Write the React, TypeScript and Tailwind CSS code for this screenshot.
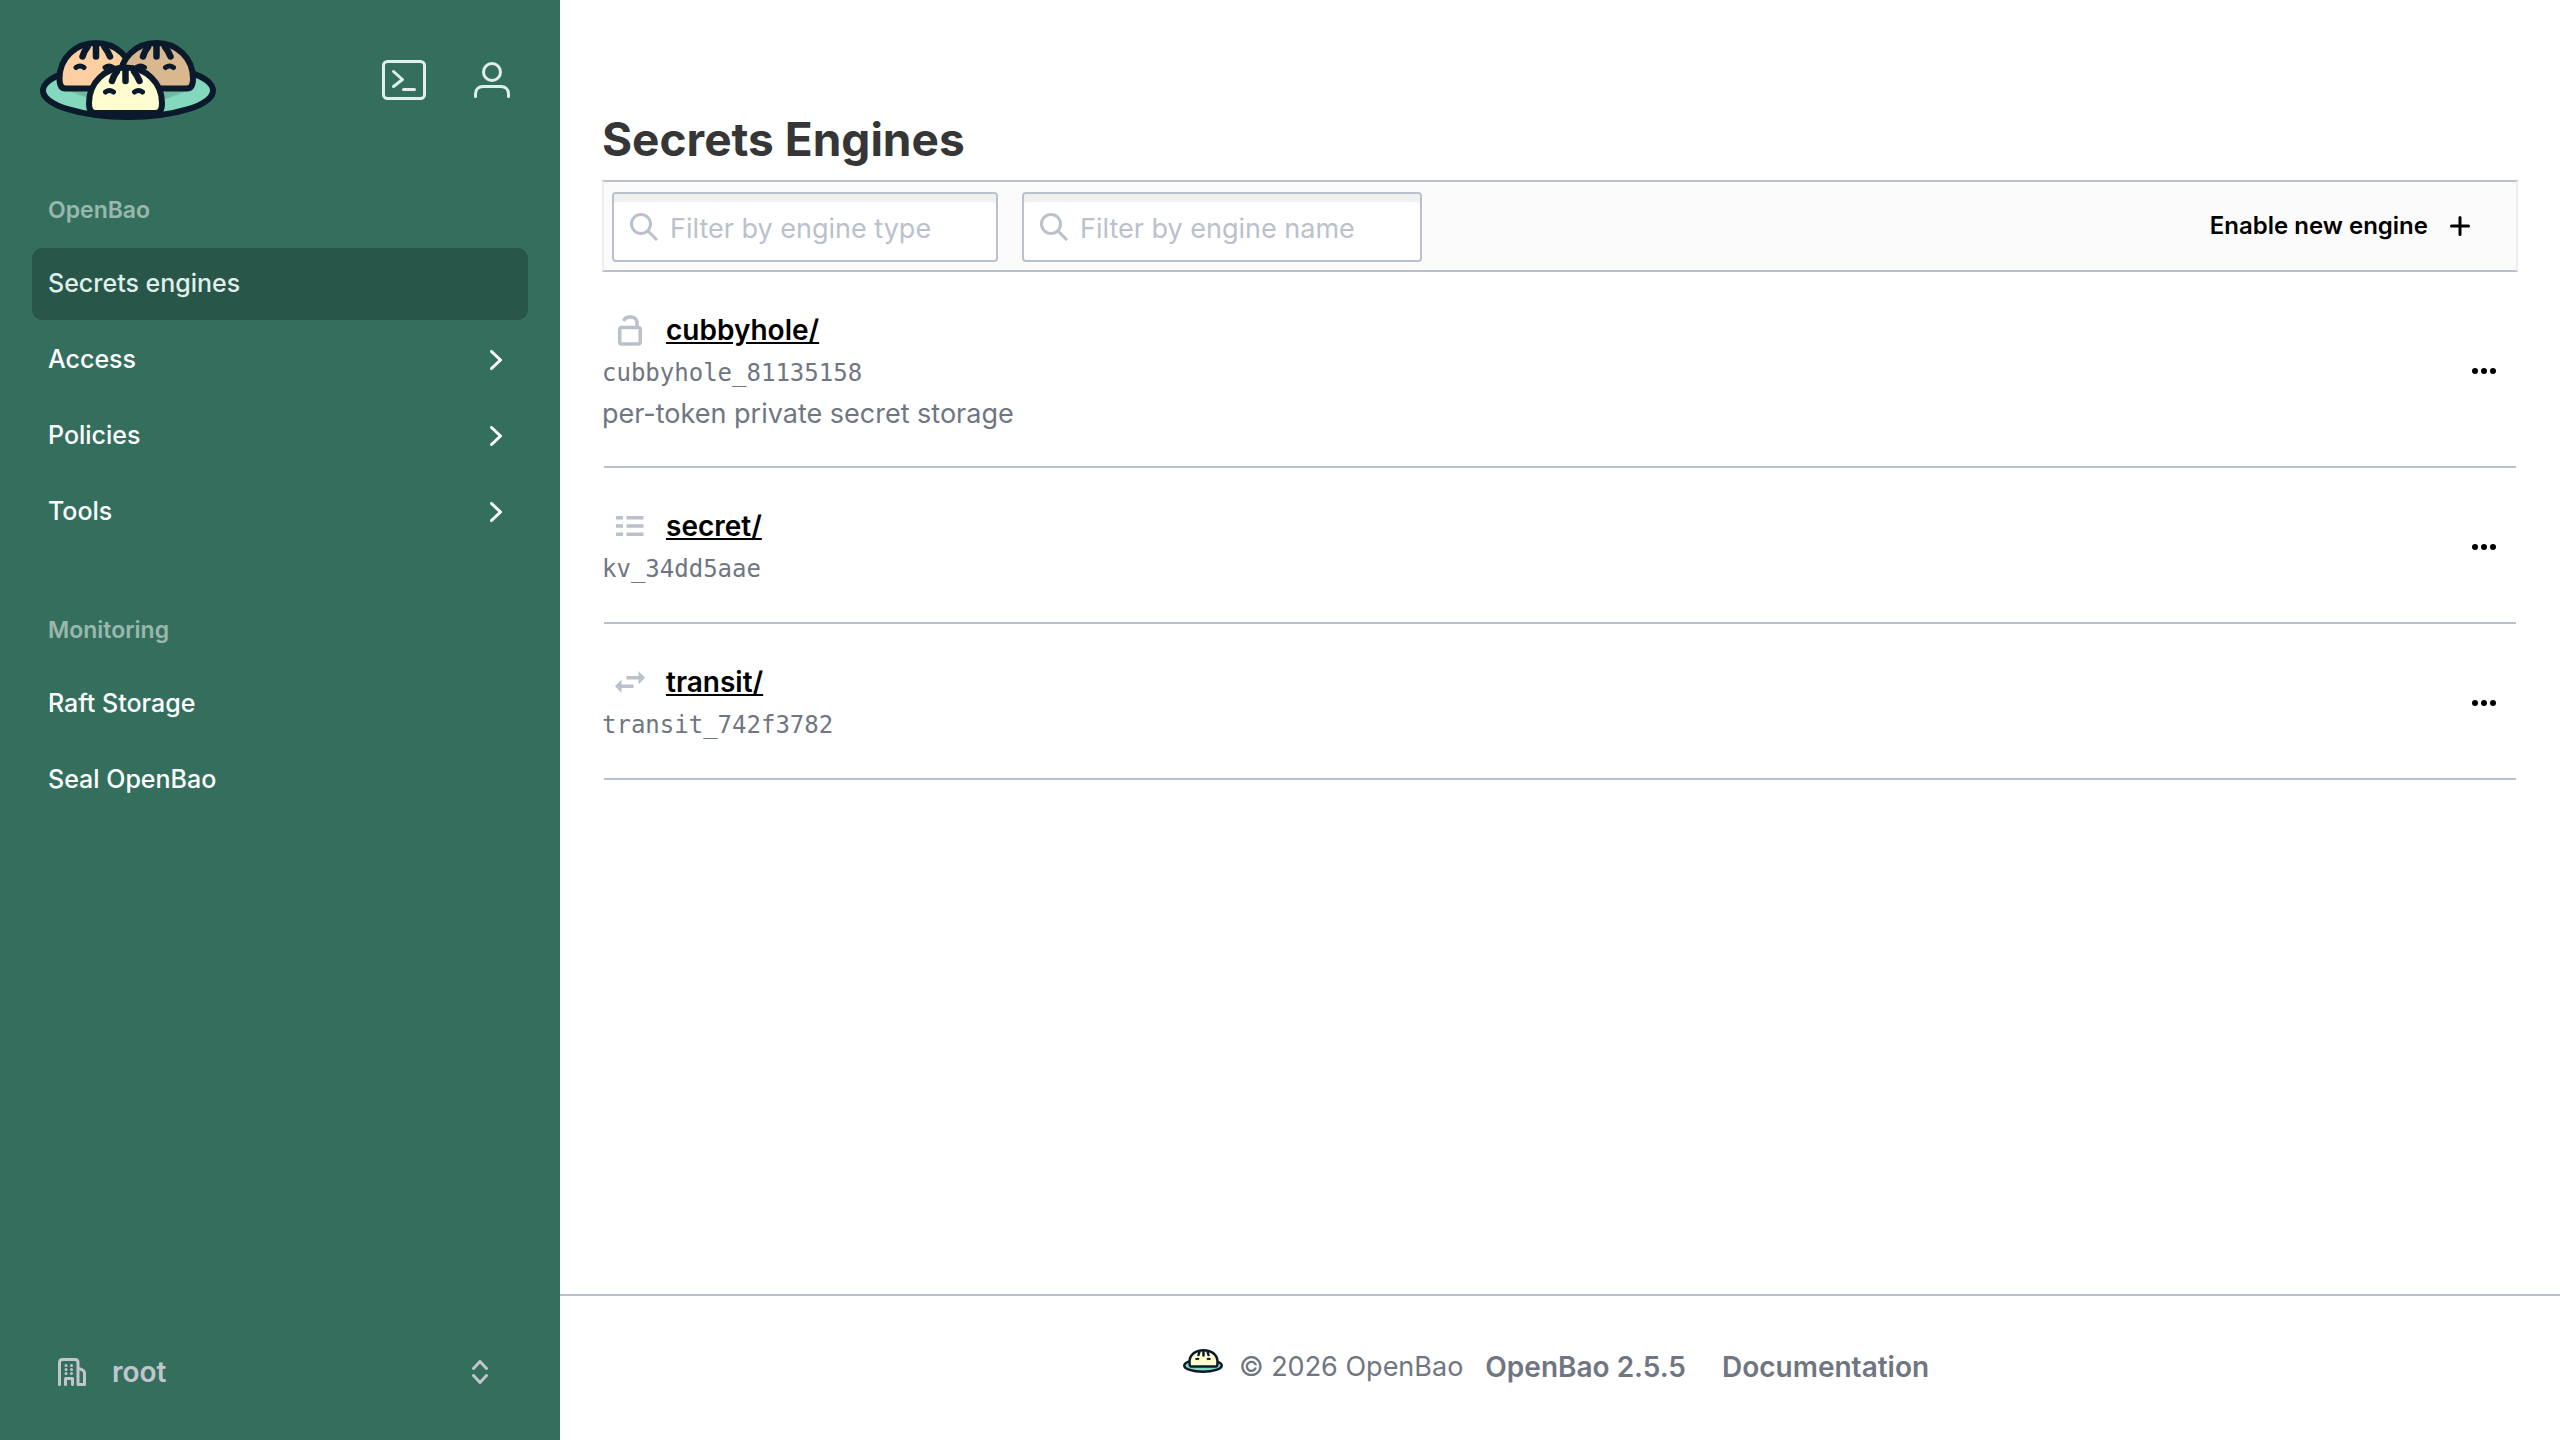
import type { ReactNode } from "react";

const navItems = [
  { label: "Secrets engines", active: true, nested: false },
  { label: "Access", active: false, nested: true },
  { label: "Policies", active: false, nested: true },
  { label: "Tools", active: false, nested: true },
];

const monitoringItems = [
  { label: "Raft Storage", active: false, nested: false },
  { label: "Seal OpenBao", active: false, nested: false },
];

type NavItem = (typeof navItems)[number];

const LockIcon = () => (
  <svg viewBox="0 0 24 32" className="w-6 h-8" fill="none" stroke="currentColor" strokeWidth="3.5" aria-hidden="true">
    <rect x="1.75" y="13.5" width="20.5" height="16.5" rx="2" />
    <path d="M5.5 7A7 6 0 0 1 19 8V13" />
  </svg>
);

const ListIcon = () => (
  <svg viewBox="0 0 28 20" className="w-7 h-5" fill="currentColor" aria-hidden="true">
    <path d="M0 0h7v3.500H0zM10.500 0h17v3.500h-17zM0 8.250h7v3.500H0zM10.500 8.250h17v3.500h-17zM0 16.500h7v3.500H0zM10.500 16.500h17v3.500h-17z" />
  </svg>
);

const SwapIcon = () => (
  <svg viewBox="0 0 30 22" className="w-[30px] h-[22px]" fill="currentColor" aria-hidden="true">
    <path d="M11.500 5h12V0l6.500 6.750-6.500 6.750V8.500h-12z" />
    <path d="M18.500 13.500h-12V8.500L0 15.250l6.500 6.750v-5h12z" />
  </svg>
);

const engines = [
  {
    path: "cubbyhole/",
    accessor: "cubbyhole_81135158",
    description: "per-token private secret storage",
    icon: <LockIcon />,
  },
  { path: "secret/", accessor: "kv_34dd5aae", description: "", icon: <ListIcon /> },
  { path: "transit/", accessor: "transit_742f3782", description: "", icon: <SwapIcon /> },
];

const Bun = ({ x, y, fill }: { x: number; y: number; fill: string }) => (
  <g transform={`translate(${x} ${y})`} stroke="#0a1a2a" strokeLinecap="round">
    <path
      d="M9 48.500C4.500 48.500 3 45 3 38.500C3 18 19 3 39.500 3S76 18 76 38.500C76 45 74.500 48.500 70 48.500Z"
      fill={fill}
      strokeWidth="6"
      strokeLinejoin="round"
    />
    <path d="M39.500 5V16.500M31 7C28.500 10 27 13 26 16.500M48 7C50.500 10 52 13 53.500 16.500" fill="none" strokeWidth="6.500" />
    <path d="M19.500 27.500Q23.500 24.500 27.500 27.500M48.500 27.500Q52.500 24.500 56.500 27.500" fill="none" strokeWidth="5" />
  </g>
);

const Logo = () => (
  <svg viewBox="0 0 176 80" className="w-44 h-20" role="img" aria-label="OpenBao">
    <ellipse cx="88" cy="50.500" rx="85" ry="26.500" fill="#84d8bd" stroke="#0a1a2a" strokeWidth="6" />
    <path d="M24 49H64V64ZM152 49H112V64Z" fill="#6fb9a0" />
    <Bun x={16.5} y={0} fill="#ffd0a3" />
    <Bun x={77} y={0} fill="#d9b78f" />
    <Bun x={46} y={24.5} fill="#fffdd0" />
  </svg>
);

const FooterLogo = () => (
  <svg viewBox="0 0 40 24" className="w-10 h-6 mb-3" aria-hidden="true">
    <ellipse cx="20" cy="16.500" rx="18.750" ry="6.250" fill="#84d8bd" stroke="#0a1a2a" strokeWidth="2.500" />
    <path
      d="M8 17.500C6.500 17.500 6.500 15.500 6.500 13C6.500 6 12 1.250 20.500 1.250S34.500 6 34.500 13C34.500 15.500 34.500 17.500 33 17.500Z"
      fill="#fffdd0"
      stroke="#0a1a2a"
      strokeWidth="2.500"
    />
    <path d="M20.500 1.500V6.500M16.500 2.500L15.500 6M24.500 2.500L25.500 6" stroke="#0a1a2a" strokeWidth="2.500" strokeLinecap="round" />
    <path d="M12.500 10.500Q14.500 9 16 10.500M24 10.500Q25.500 9 27.500 10.500" fill="none" stroke="#0a1a2a" strokeWidth="2" />
  </svg>
);

const ChevronRight = () => (
  <svg viewBox="0 0 12 20" className="w-3 h-5" fill="none" stroke="currentColor" strokeWidth="3" strokeLinecap="round" strokeLinejoin="round" aria-hidden="true">
    <path d="M1.500 1.500L10.500 10L1.500 18.500" />
  </svg>
);

const SearchIcon = () => (
  <svg viewBox="0 0 28 28" className="w-7 h-7 shrink-0" fill="none" stroke="currentColor" strokeWidth="3" aria-hidden="true">
    <circle cx="11" cy="11" r="9.500" />
    <path d="M17.500 17.500L27 27" />
  </svg>
);

const NavSection = ({ title, items }: { title: string; items: NavItem[] }) => (
  <section>
    <h2 className="h-9 px-4 leading-9 text-[23px] font-semibold text-white/50">{title}</h2>
    <ul className="flex flex-col gap-1 pt-5">
      {items.map((item) => (
        <li key={item.label}>
          <a
            href="#"
            className={`flex items-center justify-between h-[72px] pl-4 pr-[26px] rounded-[10px] text-[25px] font-medium ${
              item.active ? "bg-[#285648] text-[#dff0ea]" : "text-white"
            }`}
          >
            {item.label}
            {item.nested && <ChevronRight />}
          </a>
        </li>
      ))}
    </ul>
  </section>
);

const Sidebar = () => (
  <aside className="flex flex-col w-[560px] shrink-0 px-8 bg-[#346f5e]">
    <div className="flex items-center justify-between pl-2 pr-[18px] pt-10">
      <a href="#">
        <Logo />
      </a>
      <div className="flex items-center gap-12 text-[#dff0ea]">
        <button aria-label="Console">
          <svg viewBox="0 0 44 40" className="w-11 h-10" fill="none" stroke="currentColor" strokeWidth="3" strokeLinecap="round" strokeLinejoin="round">
            <rect x="1.500" y="1.500" width="41" height="37" rx="4" />
            <path d="M11.500 11.500L20.500 19.500L11.500 26.500M21.500 29.500H32.500" />
          </svg>
        </button>
        <button aria-label="User menu">
          <svg viewBox="0 0 36 36" className="w-9 h-9" fill="none" stroke="currentColor" strokeWidth="3" strokeLinecap="round">
            <circle cx="18" cy="10" r="8.500" />
            <path d="M1.500 34.500V32C1.500 27 5 24.500 9 24.500H27C31 24.500 34.500 27 34.500 32V34.500" />
          </svg>
        </button>
      </div>
    </div>

    <nav className="flex flex-col gap-16 pt-[72px]">
      <NavSection title="OpenBao" items={navItems} />
      <NavSection title="Monitoring" items={monitoringItems} />
    </nav>

    <button className="flex items-center mt-auto mb-12 h-10 pl-[26px] pr-10 text-[#c2c5cb]">
      <svg viewBox="0 0 28 28" className="w-7 h-7" fill="none" stroke="currentColor" strokeWidth="3" strokeLinecap="round" strokeLinejoin="round" aria-hidden="true">
        <path d="M1.500 26.500V4.500Q1.500 1.500 4.500 1.500H17Q20 1.500 20 4.500V26.500H26.500V15Q26.500 12 20.500 10.500M7.500 26.500V20.500H14.500V26.500" />
        <path d="M8 7.500h.01M13.500 7.500h.01M8 11.500h.01M13.500 11.500h.01M8 15.500h.01M13.500 15.500h.01" />
      </svg>
      <span className="pl-[26px] text-[28px] font-semibold">root</span>
      <svg viewBox="0 0 16 24" className="w-4 h-6 ml-auto" fill="none" stroke="currentColor" strokeWidth="3" strokeLinecap="round" strokeLinejoin="round" aria-hidden="true">
        <path d="M1.500 8.500L8 1.500L14.500 8.500M1.500 15.500L8 22.500L14.500 15.500" />
      </svg>
    </button>
  </aside>
);

const FilterInput = ({ id, label, className }: { id: string; label: string; className: string }) => (
  <div
    className={`flex items-center gap-3 h-[70px] pl-4 border-2 border-[#bac1cc] rounded-[4px] bg-white text-[#bac1cc] shadow-[inset_0_8px_1px_#f0f0f0] ${className}`}
  >
    <SearchIcon />
    <input
      id={id}
      type="text"
      aria-label={label}
      placeholder={label}
      className="w-full h-full pt-0.5 bg-transparent text-[27px] text-[#3b3b3b] placeholder:text-[#bac1cc] outline-none"
    />
  </div>
);

const EngineRow = ({ path, accessor, description, icon }: { path: string; accessor: string; description: string; icon: ReactNode }) => (
  <li>
    <div className="flex items-center justify-between pt-9 pb-8 pr-[22px]">
      <div>
        <div className="flex items-center h-11">
          <span className="flex justify-center w-14 text-[#bac1cc]">{icon}</span>
          <a href="#" className="pl-2 text-[28px] font-semibold text-black underline">
            {path}
          </a>
        </div>
        <div className="h-[42px] leading-[42px] font-['DejaVu_Sans_Mono',monospace] text-2xl text-[#6f7682]">{accessor}</div>
        {description && <p className="h-10 leading-10 text-[27px] text-[#6f7682]">{description}</p>}
      </div>
      <button aria-label={`Manage ${path}`} className="text-black">
        <svg viewBox="0 0 24 6" className="w-6 h-1.5" fill="currentColor">
          <circle cx="3" cy="3" r="3" />
          <circle cx="12" cy="3" r="3" />
          <circle cx="21" cy="3" r="3" />
        </svg>
      </button>
    </div>
    <hr className="mx-0.5 border-t-2 border-[#bac1cc]" />
  </li>
);

export default function App() {
  return (
    <div className="flex min-h-screen bg-white font-['Inter',sans-serif]">
      <Sidebar />
      <div className="flex flex-col grow min-w-0">
        <main className="grow px-[42px] pt-[108px]">
          <h1 className="h-[72px] leading-[62px] text-[46px] font-bold text-[#363636]">Secrets Engines</h1>
          <div className="flex items-center justify-between h-[92px] pl-2 pr-[46px] border-2 border-x-[#ebeef2] border-y-[#bac1cc] bg-[#fbfbfb]">
            <div className="flex gap-6 pt-0.5">
              <FilterInput id="engine-type" label="Filter by engine type" className="w-[386px]" />
              <FilterInput id="engine-name" label="Filter by engine name" className="w-[400px]" />
            </div>
            <button className="flex items-center gap-[22px] text-2xl font-semibold text-black">
              Enable new engine
              <svg viewBox="0 0 20 20" className="w-5 h-5" stroke="currentColor" strokeWidth="3" strokeLinecap="round" aria-hidden="true">
                <path d="M10 1.500V18.500M1.500 10H18.500" />
              </svg>
            </button>
          </div>
          <ul>
            {engines.map((engine) => (
              <EngineRow key={engine.path} {...engine} />
            ))}
          </ul>
        </main>
        <footer className="flex items-center justify-center h-[146px] pr-2 pb-0.5 border-t-2 border-[#bac1cc] text-[27px] text-[#6f7682]">
          <FooterLogo />
          <span className="pl-4">© 2026 OpenBao</span>
          <a href="#" className="pl-[22px] text-[28px] font-semibold">
            OpenBao 2.5.5
          </a>
          <a href="#" className="pl-9 text-[28px] font-semibold">
            Documentation
          </a>
        </footer>
      </div>
    </div>
  );
}
